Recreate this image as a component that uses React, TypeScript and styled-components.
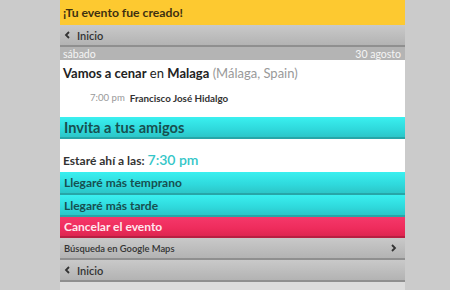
import React from "react";
import styled, { createGlobalStyle } from "styled-components";

const Global = createGlobalStyle`
  html, body { margin: 0; padding: 0; background: #cbcbcb; }
  body { font-family: Lato, "Open Sans", "DejaVu Sans", sans-serif; }
`;

const Page = styled.div`
  width: 345px;
  height: 290px;
  margin: 0 auto 0 60px;
  background: #dcdcdc;
  display: flex;
  flex-direction: column;
`;

const Banner = styled.div`
  height: 25px;
  background: #fdc930;
  color: #3e3010;
  font-weight: 700;
  font-size: 12.2px;
  display: flex;
  align-items: center;
  padding-left: 3px;
  box-sizing: border-box;
`;

const GreyBar = styled.div<{ $size?: number }>`
  height: 22px;
  box-sizing: border-box;
  background: linear-gradient(#c9c9c9, #b3b3b3);
  border-bottom: 2px solid #8f8f8f;
  display: flex;
  align-items: center;
  padding: 0 8px 0 4px;
  font-size: ${(p) => p.$size ?? 11}px;
  color: #333;
  font-weight: 600;
  gap: 6px;
`;

const DateBar = styled.div`
  height: 13px;
  background: #b4b4b4;
  color: #f4f4f4;
  font-size: 10.5px;
  display: flex;
  align-items: center;
  justify-content: space-between;
  padding: 0 4px 0 3px;
`;

const White = styled.div<{ $h: number }>`
  height: ${(p) => p.$h}px;
  box-sizing: border-box;
  background: #fff;
`;

const Title = styled.div`
  font-size: 13px;
  color: #222;
  padding: 5px 0 0 3px;
  b { font-weight: 700; }
  span.muted { color: #999; }
`;

const Host = styled.div`
  font-size: 9.6px;
  padding: 11px 0 0 30px;
  display: flex;
  gap: 5px;
  color: #999;
  b { color: #333; font-weight: 700; font-size: 9.8px; }
`;

const Action = styled.div<{ $tone: "cyan" | "red"; $h: number; $size?: number }>`
  height: ${(p) => p.$h}px;
  box-sizing: border-box;
  display: flex;
  align-items: center;
  padding-left: 4px;
  font-weight: 700;
  font-size: ${(p) => p.$size ?? 12}px;
  background: ${(p) =>
    p.$tone === "cyan"
      ? "linear-gradient(#3af0f0, #2fd9dc 60%, #2cc6c8)"
      : "linear-gradient(#f5386a, #ee2c5c 60%, #dd2650)"};
  color: ${(p) => (p.$tone === "cyan" ? "#175050" : "#ffe8ee")};
  border-bottom: 2px solid ${(p) => (p.$tone === "cyan" ? "#27a6a8" : "#b81f42")};
`;

const Arrive = styled.div`
  padding: 12px 0 0 3px;
  font-size: 12px;
  font-weight: 700;
  color: #333;
  span { color: #34c6c8; font-size: 14px; font-weight: 600; margin-left: 3px; }
`;

const Chevron = ({ dir }: { dir: "left" | "right" }) => (
  <svg width="7" height="8" viewBox="0 0 7 8">
    <path
      d={dir === "left" ? "M5 1 L2 4 L5 7" : "M2 1 L5 4 L2 7"}
      fill="none"
      stroke="#333"
      strokeWidth="1.8"
    />
  </svg>
);

const Spacer = styled.div`
  flex: 1;
`;

export default function App() {
  return (
    <>
      <Global />
      <Page>
        <Banner>¡Tu evento fue creado!</Banner>
        <GreyBar>
          <Chevron dir="left" />
          Inicio
        </GreyBar>
        <DateBar>
          <span>sábado</span>
          <span>30 agosto</span>
        </DateBar>
        <White $h={57}>
          <Title>
            <b>Vamos a cenar</b> en <b>Malaga</b> <span className="muted">(Málaga, Spain)</span>
          </Title>
          <Host>
            <span>7:00 pm</span>
            <b>Francisco José Hidalgo</b>
          </Host>
        </White>
        <Action $tone="cyan" $h={22} $size={14.6}>Invita a tus amigos</Action>
        <White $h={33}>
          <Arrive>
            Estaré ahí a las:<span>7:30 pm</span>
          </Arrive>
        </White>
        <Action $tone="cyan" $h={23}>Llegaré más temprano</Action>
        <Action $tone="cyan" $h={22}>Llegaré más tarde</Action>
        <Action $tone="red" $h={21} $size={12}>Cancelar el evento</Action>
        <GreyBar $size={9.4}>
          Búsqueda en Google Maps
          <Spacer />
          <Chevron dir="right" />
        </GreyBar>
        <GreyBar>
          <Chevron dir="left" />
          Inicio
        </GreyBar>
      </Page>
    </>
  );
}
